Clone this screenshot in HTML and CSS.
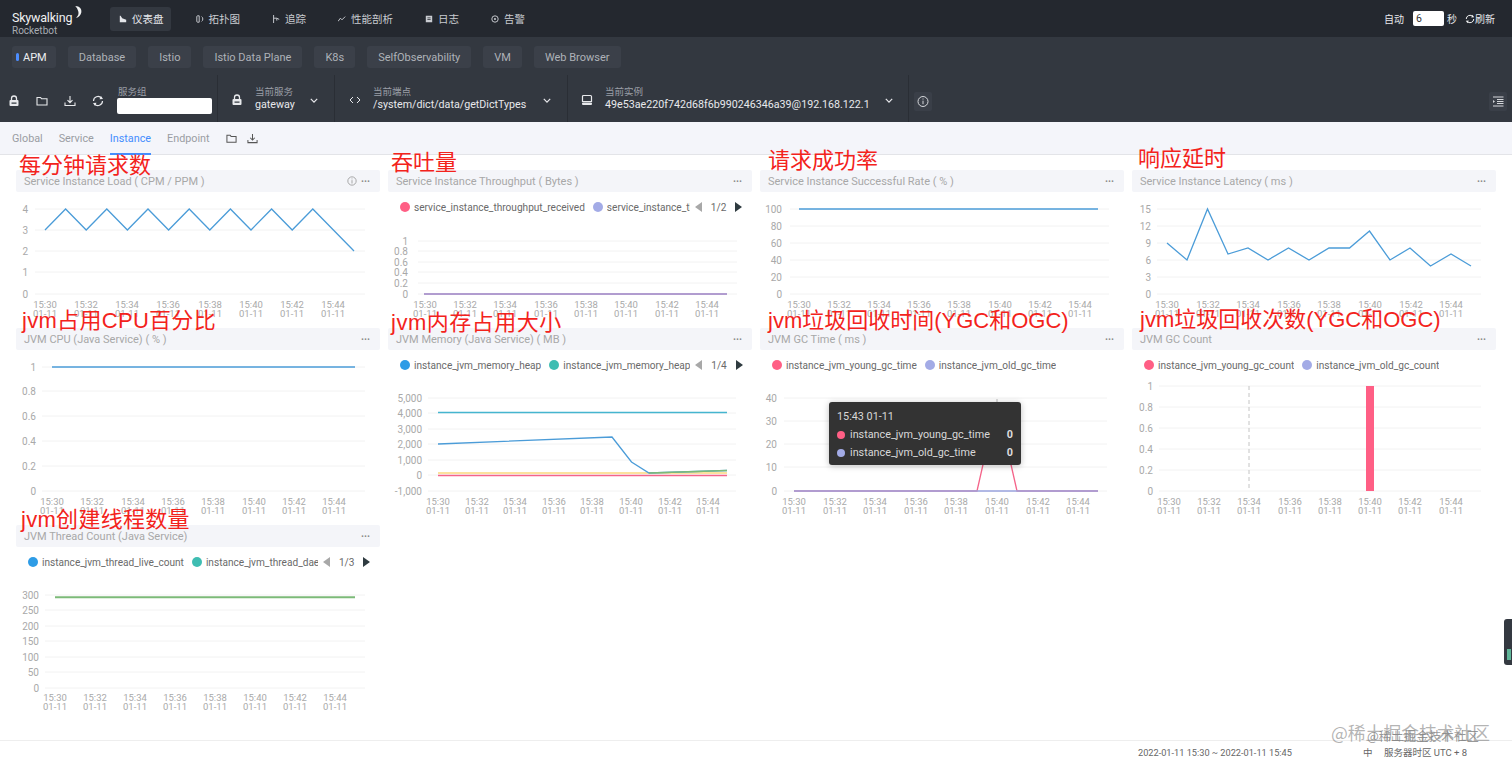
FILE: index.html
```html
<!DOCTYPE html>
<html lang="zh">
<head>
<meta charset="utf-8">
<title>SkyWalking Rocketbot</title>
<link rel="stylesheet" href="styles.css">
</head>
<body>
<header class="topnav">
  <div class="logo">
    <div class="logo-main">Skywalking<svg class="swoosh" viewBox="0 0 12 16"><path d="M3 0c6 0 9 4 8 9-1 3-3 6-7 7 3-3 4-6 3-9-1-3-2-5-4-7z"/></svg></div>
    <div class="logo-sub">Rocketbot</div>
  </div>
  <nav class="nav">
    <a class="nav-item active"><svg class="ni" viewBox="0 0 10 10"><path d="M1 1v8h8V6L4 4 2 1z"/></svg>仪表盘</a>
    <a class="nav-item"><svg class="ni" viewBox="0 0 10 10"><path class="st" d="M2 1h2v8H2a1 1 0 0 1-1-1V2a1 1 0 0 1 1-1zM7 2c2 1 2 5 0 6"/></svg>拓扑图</a>
    <a class="nav-item"><svg class="ni" viewBox="0 0 10 10"><path class="st" d="M2 0v10M2 4h4l3 1.500M6 4v3"/></svg>追踪</a>
    <a class="nav-item"><svg class="ni" viewBox="0 0 10 10"><path class="st" d="M0 8l3-4 2 2 4-4"/></svg>性能剖析</a>
    <a class="nav-item"><svg class="ni" viewBox="0 0 10 10"><path d="M1 1h8v8H1zM3 3v1h4V3zM3 5v1h4V5z" fill-rule="evenodd"/></svg>日志</a>
    <a class="nav-item"><svg class="ni" viewBox="0 0 10 10"><circle class="st" cx="5" cy="5" r="4"/><circle cx="5" cy="5" r="1.300"/></svg>告警</a>
  </nav>
  <div class="auto">
    <span>自动</span>
    <input class="auto-input" value="6" aria-label="seconds">
    <span class="sec">秒</span>
    <svg class="ref" viewBox="0 0 12 12"><path class="st" d="M10.500 6A4.500 4.500 0 0 1 2.500 8.800M1.500 6A4.500 4.500 0 0 1 9.500 3.200"/><path d="M9 1l2 3-3.500 .3zM3 11L1 8l3.500-.3z"/></svg>
    <span>刷新</span>
  </div>
</header>

<div class="subbar">
  <a class="chip current"><i class="dot"></i>APM</a>
  <a class="chip">Database</a>
  <a class="chip">Istio</a>
  <a class="chip">Istio Data Plane</a>
  <a class="chip">K8s</a>
  <a class="chip">SelfObservability</a>
  <a class="chip">VM</a>
  <a class="chip">Web Browser</a>
</div>

<div class="toolbar">
  <div class="tools">
    <svg class="ti" viewBox="0 0 12 12"><use href="#i-lock"/></svg>
    <svg class="ti" viewBox="0 0 12 12"><use href="#i-folder"/></svg>
    <svg class="ti" viewBox="0 0 12 12"><use href="#i-down"/></svg>
    <svg class="ti" viewBox="0 0 12 12"><path class="st2" d="M10.500 6A4.500 4.500 0 0 1 2.500 8.800M1.500 6A4.500 4.500 0 0 1 9.500 3.200"/><path class="fl" d="M9 1l2 3-3.500 .3zM3 11L1 8l3.500-.3z"/></svg>
  </div>
  <div class="tool-block group">
    <label class="tb-label">服务组</label>
    <input class="group-input" aria-label="服务组">
  </div>
  <div class="tool-block service">
    <svg class="tb-icon" viewBox="0 0 12 12"><use href="#i-lock"/></svg>
    <div class="tb-text"><span class="tb-label">当前服务</span><span class="tb-val">gateway</span></div>
    <svg class="chev" viewBox="0 0 10 6"><path d="M1 1l4 4 4-4"/></svg>
  </div>
  <div class="tool-block endpoint">
    <svg class="tb-icon" viewBox="0 0 12 12"><path class="st2 thin" d="M4 3L1 6l3 3M8 3l3 3-3 3"/></svg>
    <div class="tb-text"><span class="tb-label">当前端点</span><span class="tb-val">/system/dict/data/getDictTypes</span></div>
    <svg class="chev" viewBox="0 0 10 6"><path d="M1 1l4 4 4-4"/></svg>
  </div>
  <div class="tool-block instance">
    <svg class="tb-icon" viewBox="0 0 12 12"><path class="st2" d="M2.500 1.500h7a1 1 0 0 1 1 1v5h-9v-5a1 1 0 0 1 1-1z"/><rect class="fl" x="1" y="8.500" width="10" height="2.500" rx="1"/></svg>
    <div class="tb-text"><span class="tb-label">当前实例</span><span class="tb-val">49e53ae220f742d68f6b990246346a39@192.168.122.1</span></div>
    <svg class="chev" viewBox="0 0 10 6"><path d="M1 1l4 4 4-4"/></svg>
  </div>
  <button class="icon-btn info" aria-label="info"><svg viewBox="0 0 12 12"><circle class="st2 thin" cx="6" cy="6" r="5"/><path class="st2 thin" d="M6 5.200v3.500M6 3v1"/></svg></button>
  <button class="icon-btn side" aria-label="menu"><svg viewBox="0 0 12 12"><path class="st2 thin" d="M1 1.500h10.500M5 4h6.500M5 6h6.500M5 8h6.500M1 10.500h10.500"/><path class="fl" d="M1 4.500L3 6 1 7.500z"/></svg></button>
</div>

<div class="tabs">
  <a class="tab">Global</a>
  <a class="tab">Service</a>
  <a class="tab on">Instance</a>
  <a class="tab">Endpoint</a>
  <svg class="tab-icon first" viewBox="0 0 12 12"><use href="#i-folder"/></svg>
  <svg class="tab-icon" viewBox="0 0 12 12"><use href="#i-down"/></svg>
</div>

<main class="board">
  <section class="card r1">
    <span class="note n1">每分钟请求数</span>
    <div class="card-head"><span>Service Instance Load ( CPM / PPM )</span><span class="head-tools"><svg class="head-i" viewBox="0 0 12 12"><circle cx="6" cy="6" r="5"/><path d="M6 5v4M6 3v1"/></svg><b class="more">···</b></span></div>
    <svg class="chart" width="364" height="136" viewBox="16 192 364 136">
      <g class="grid"><path d="M35 209H365M35 230H365M35 251H365M35 272H365M35 294H365"/></g>
      <g class="yl"><text x="28" y="209">4</text><text x="28" y="230">3</text><text x="28" y="251">2</text><text x="28" y="272">1</text><text x="28" y="294">0</text></g>
      <polyline class="l blue" points="45,230 65.600,209 86.200,230 106.800,209 127.400,230 148,209 168.600,230 189.200,209 209.800,230 230.400,209 251,230 271.600,209 292.200,230 312.800,209 333.400,230 354,251"/>
      <g class="xl"><text x="45" y="308">15:30<tspan x="45" dy="8.700">01-11</tspan></text><text x="86" y="308">15:32<tspan x="86" dy="8.700">01-11</tspan></text><text x="127" y="308">15:34<tspan x="127" dy="8.700">01-11</tspan></text><text x="168" y="308">15:36<tspan x="168" dy="8.700">01-11</tspan></text><text x="210" y="308">15:38<tspan x="210" dy="8.700">01-11</tspan></text><text x="251" y="308">15:40<tspan x="251" dy="8.700">01-11</tspan></text><text x="292" y="308">15:42<tspan x="292" dy="8.700">01-11</tspan></text><text x="333" y="308">15:44<tspan x="333" dy="8.700">01-11</tspan></text></g>
    </svg>
  </section>

  <section class="card r1">
    <span class="note n2">吞吐量</span>
    <div class="card-head"><span>Service Instance Throughput ( Bytes )</span><b class="more">···</b></div>
    <div class="legend">
      <span class="li"><i class="c pink"></i><span class="lt">service_instance_throughput_received</span></span>
      <span class="li"><i class="c violet"></i><span class="lt clip-a">service_instance_throughput_sent</span></span>
      <span class="pager"><i class="ar left"></i><span>1/2</span><i class="ar right"></i></span>
    </div>
    <svg class="chart" width="364" height="106" viewBox="388 222 364 106">
      <g class="grid"><path d="M418 241H737M418 251H737M418 262H737M418 272H737M418 283H737M418 294H737"/></g>
      <g class="yl"><text x="408" y="241">1</text><text x="408" y="251">0.8</text><text x="408" y="262">0.6</text><text x="408" y="272">0.4</text><text x="408" y="283">0.2</text><text x="408" y="294">0</text></g>
      <path class="l pinkl" d="M424 294H727"/><path class="l violetl" d="M424 294H727"/>
      <g class="xl"><text x="425" y="308">15:30<tspan x="425" dy="8.700">01-11</tspan></text><text x="465" y="308">15:32<tspan x="465" dy="8.700">01-11</tspan></text><text x="505" y="308">15:34<tspan x="505" dy="8.700">01-11</tspan></text><text x="546" y="308">15:36<tspan x="546" dy="8.700">01-11</tspan></text><text x="586" y="308">15:38<tspan x="586" dy="8.700">01-11</tspan></text><text x="626" y="308">15:40<tspan x="626" dy="8.700">01-11</tspan></text><text x="667" y="308">15:42<tspan x="667" dy="8.700">01-11</tspan></text><text x="707" y="308">15:44<tspan x="707" dy="8.700">01-11</tspan></text></g>
    </svg>
  </section>

  <section class="card r1">
    <span class="note n3">请求成功率</span>
    <div class="card-head"><span>Service Instance Successful Rate ( % )</span><b class="more">···</b></div>
    <svg class="chart" width="364" height="136" viewBox="760 192 364 136">
      <g class="grid"><path d="M790 209H1109M790 226H1109M790 243H1109M790 260H1109M790 277H1109M790 294H1109"/></g>
      <g class="yl"><text x="782" y="209">100</text><text x="782" y="226">80</text><text x="782" y="243">60</text><text x="782" y="260">40</text><text x="782" y="277">20</text><text x="782" y="294">0</text></g>
      <path class="l blue" d="M799 209H1098"/>
      <g class="xl"><text x="799" y="308">15:30<tspan x="799" dy="8.700">01-11</tspan></text><text x="839" y="308">15:32<tspan x="839" dy="8.700">01-11</tspan></text><text x="879" y="308">15:34<tspan x="879" dy="8.700">01-11</tspan></text><text x="919" y="308">15:36<tspan x="919" dy="8.700">01-11</tspan></text><text x="959" y="308">15:38<tspan x="959" dy="8.700">01-11</tspan></text><text x="1000" y="308">15:40<tspan x="1000" dy="8.700">01-11</tspan></text><text x="1040" y="308">15:42<tspan x="1040" dy="8.700">01-11</tspan></text><text x="1080" y="308">15:44<tspan x="1080" dy="8.700">01-11</tspan></text></g>
    </svg>
  </section>

  <section class="card r1">
    <span class="note n4">响应延时</span>
    <div class="card-head"><span>Service Instance Latency ( ms )</span><b class="more">···</b></div>
    <svg class="chart" width="364" height="136" viewBox="1132 192 364 136">
      <g class="grid"><path d="M1157 209H1481M1157 226H1481M1157 243H1481M1157 260H1481M1157 277H1481M1157 294H1481"/></g>
      <g class="yl"><text x="1151" y="209">15</text><text x="1151" y="226">12</text><text x="1151" y="243">9</text><text x="1151" y="260">6</text><text x="1151" y="277">3</text><text x="1151" y="294">0</text></g>
      <polyline class="l blue" points="1167,243 1187,260 1207.500,209 1228,254 1248,248 1268,260 1288.500,248 1309,260 1329,248 1349.500,248 1369.500,231 1390,260 1410,248 1430.500,266 1451,254 1471,266"/>
      <g class="xl"><text x="1167" y="308">15:30<tspan x="1167" dy="8.700">01-11</tspan></text><text x="1208" y="308">15:32<tspan x="1208" dy="8.700">01-11</tspan></text><text x="1248" y="308">15:34<tspan x="1248" dy="8.700">01-11</tspan></text><text x="1289" y="308">15:36<tspan x="1289" dy="8.700">01-11</tspan></text><text x="1329" y="308">15:38<tspan x="1329" dy="8.700">01-11</tspan></text><text x="1370" y="308">15:40<tspan x="1370" dy="8.700">01-11</tspan></text><text x="1411" y="308">15:42<tspan x="1411" dy="8.700">01-11</tspan></text><text x="1451" y="308">15:44<tspan x="1451" dy="8.700">01-11</tspan></text></g>
    </svg>
  </section>

  <section class="card r2">
    <span class="note n5">jvm占用CPU百分比</span>
    <div class="card-head"><span>JVM CPU (Java Service) ( % )</span><b class="more">···</b></div>
    <svg class="chart" width="364" height="175" viewBox="16 350 364 175">
      <g class="grid"><path d="M42 367H365M42 391H365M42 416H365M42 441H365M42 466H365M42 491H365"/></g>
      <g class="yl"><text x="36" y="367">1</text><text x="36" y="391">0.8</text><text x="36" y="416">0.6</text><text x="36" y="441">0.4</text><text x="36" y="466">0.2</text><text x="36" y="491">0</text></g>
      <path class="l blue" d="M52 367H355"/>
      <g class="xl"><text x="52" y="505">15:30<tspan x="52" dy="8.700">01-11</tspan></text><text x="92" y="505">15:32<tspan x="92" dy="8.700">01-11</tspan></text><text x="133" y="505">15:34<tspan x="133" dy="8.700">01-11</tspan></text><text x="173" y="505">15:36<tspan x="173" dy="8.700">01-11</tspan></text><text x="213" y="505">15:38<tspan x="213" dy="8.700">01-11</tspan></text><text x="254" y="505">15:40<tspan x="254" dy="8.700">01-11</tspan></text><text x="294" y="505">15:42<tspan x="294" dy="8.700">01-11</tspan></text><text x="334" y="505">15:44<tspan x="334" dy="8.700">01-11</tspan></text></g>
    </svg>
  </section>

  <section class="card r2">
    <span class="note n6">jvm内存占用大小</span>
    <div class="card-head"><span>JVM Memory (Java Service) ( MB )</span><b class="more">···</b></div>
    <div class="legend">
      <span class="li"><i class="c sky"></i><span class="lt">instance_jvm_memory_heap</span></span>
      <span class="li"><i class="c teal"></i><span class="lt clip-b">instance_jvm_memory_heap_max</span></span>
      <span class="pager"><i class="ar left"></i><span>1/4</span><i class="ar right"></i></span>
    </div>
    <svg class="chart" width="364" height="145" viewBox="388 380 364 145">
      <g class="grid"><path d="M428 398H736M428 413H736M428 429H736M428 444H736M428 460H736M428 475H736M428 491H736"/></g>
      <g class="yl"><text x="422" y="398">5,000</text><text x="422" y="413">4,000</text><text x="422" y="429">3,000</text><text x="422" y="444">2,000</text><text x="422" y="460">1,000</text><text x="422" y="475">0</text><text x="422" y="491">-1,000</text></g>
      <path class="l tealish" d="M438 412.500H727"/>
      <path class="l orange" d="M438 473H727"/>
      <path class="l pinkl" d="M438 475.500H727"/>
      <polyline class="l blue" points="438,444 612,437 631.500,462 649,473 727,470.500"/>
      <polyline class="l green" points="649,473 727,470.500"/>
      <g class="xl"><text x="438" y="505">15:30<tspan x="438" dy="8.700">01-11</tspan></text><text x="477" y="505">15:32<tspan x="477" dy="8.700">01-11</tspan></text><text x="515" y="505">15:34<tspan x="515" dy="8.700">01-11</tspan></text><text x="554" y="505">15:36<tspan x="554" dy="8.700">01-11</tspan></text><text x="592" y="505">15:38<tspan x="592" dy="8.700">01-11</tspan></text><text x="631" y="505">15:40<tspan x="631" dy="8.700">01-11</tspan></text><text x="670" y="505">15:42<tspan x="670" dy="8.700">01-11</tspan></text><text x="708" y="505">15:44<tspan x="708" dy="8.700">01-11</tspan></text></g>
    </svg>
  </section>

  <section class="card r2">
    <span class="note n7">jvm垃圾回收时间(YGC和OGC)</span>
    <div class="card-head"><span>JVM GC Time ( ms )</span><b class="more">···</b></div>
    <div class="legend">
      <span class="li"><i class="c pink"></i><span class="lt">instance_jvm_young_gc_time</span></span>
      <span class="li"><i class="c violet"></i><span class="lt">instance_jvm_old_gc_time</span></span>
    </div>
    <svg class="chart" width="364" height="145" viewBox="760 380 364 145">
      <g class="grid"><path d="M784 398H1107M784 421H1107M784 444H1107M784 467H1107M784 491H1107"/></g>
      <g class="yl"><text x="777" y="398">40</text><text x="777" y="421">30</text><text x="777" y="444">20</text><text x="777" y="467">10</text><text x="777" y="491">0</text></g>
      <path class="tick" d="M997 399V403"/>
      <polyline class="l pinkl" points="794,491 977,491 997,403 1017,491 1098,491"/>
      <path class="l violetl" d="M794 491H1098"/>
      <g class="xl"><text x="794" y="505">15:30<tspan x="794" dy="8.700">01-11</tspan></text><text x="835" y="505">15:32<tspan x="835" dy="8.700">01-11</tspan></text><text x="875" y="505">15:34<tspan x="875" dy="8.700">01-11</tspan></text><text x="916" y="505">15:36<tspan x="916" dy="8.700">01-11</tspan></text><text x="956" y="505">15:38<tspan x="956" dy="8.700">01-11</tspan></text><text x="997" y="505">15:40<tspan x="997" dy="8.700">01-11</tspan></text><text x="1038" y="505">15:42<tspan x="1038" dy="8.700">01-11</tspan></text><text x="1078" y="505">15:44<tspan x="1078" dy="8.700">01-11</tspan></text></g>
    </svg>
    <div class="tooltip">
      <div class="tt-time">15:43 01-11</div>
      <div class="tt-row"><i class="c pink"></i><span class="tt-name">instance_jvm_young_gc_time</span><b>0</b></div>
      <div class="tt-row"><i class="c violet"></i><span class="tt-name">instance_jvm_old_gc_time</span><b>0</b></div>
    </div>
  </section>

  <section class="card r2">
    <span class="note n8">jvm垃圾回收次数(YGC和OGC)</span>
    <div class="card-head"><span>JVM GC Count</span><b class="more">···</b></div>
    <div class="legend">
      <span class="li"><i class="c pink"></i><span class="lt">instance_jvm_young_gc_count</span></span>
      <span class="li"><i class="c violet"></i><span class="lt">instance_jvm_old_gc_count</span></span>
    </div>
    <svg class="chart" width="364" height="145" viewBox="1132 380 364 145">
      <g class="grid"><path d="M1159 386H1481M1159 407H1481M1159 428H1481M1159 449H1481M1159 470H1481M1159 491H1481"/></g>
      <g class="yl"><text x="1153" y="386">1</text><text x="1153" y="407">0.8</text><text x="1153" y="428">0.6</text><text x="1153" y="449">0.4</text><text x="1153" y="470">0.2</text><text x="1153" y="491">0</text></g>
      <path class="guide" d="M1249 386V491"/>
      <rect class="bar" x="1366" y="386" width="8" height="105"/>
      <g class="xl"><text x="1169" y="505">15:30<tspan x="1169" dy="8.700">01-11</tspan></text><text x="1209" y="505">15:32<tspan x="1209" dy="8.700">01-11</tspan></text><text x="1249" y="505">15:34<tspan x="1249" dy="8.700">01-11</tspan></text><text x="1290" y="505">15:36<tspan x="1290" dy="8.700">01-11</tspan></text><text x="1330" y="505">15:38<tspan x="1330" dy="8.700">01-11</tspan></text><text x="1370" y="505">15:40<tspan x="1370" dy="8.700">01-11</tspan></text><text x="1410" y="505">15:42<tspan x="1410" dy="8.700">01-11</tspan></text><text x="1451" y="505">15:44<tspan x="1451" dy="8.700">01-11</tspan></text></g>
    </svg>
  </section>

  <section class="card r3">
    <span class="note n9">jvm创建线程数量</span>
    <div class="card-head"><span>JVM Thread Count (Java Service)</span><b class="more">···</b></div>
    <div class="legend">
      <span class="li"><i class="c sky"></i><span class="lt">instance_jvm_thread_live_count</span></span>
      <span class="li"><i class="c teal"></i><span class="lt clip-c">instance_jvm_thread_daemon_count</span></span>
      <span class="pager"><i class="ar left"></i><span>1/3</span><i class="ar right"></i></span>
    </div>
    <svg class="chart" width="364" height="145" viewBox="16 577 364 145">
      <g class="grid"><path d="M45 595H365M45 610H365M45 626H365M45 641H365M45 657H365M45 672H365M45 688H365"/></g>
      <g class="yl"><text x="39" y="595">300</text><text x="39" y="610">250</text><text x="39" y="626">200</text><text x="39" y="641">150</text><text x="39" y="657">100</text><text x="39" y="672">50</text><text x="39" y="688">0</text></g>
      <path class="l green wide" d="M55 597.300H355"/>
      <g class="xl"><text x="55" y="701">15:30<tspan x="55" dy="8.700">01-11</tspan></text><text x="95" y="701">15:32<tspan x="95" dy="8.700">01-11</tspan></text><text x="135" y="701">15:34<tspan x="135" dy="8.700">01-11</tspan></text><text x="175" y="701">15:36<tspan x="175" dy="8.700">01-11</tspan></text><text x="215" y="701">15:38<tspan x="215" dy="8.700">01-11</tspan></text><text x="255" y="701">15:40<tspan x="255" dy="8.700">01-11</tspan></text><text x="295" y="701">15:42<tspan x="295" dy="8.700">01-11</tspan></text><text x="335" y="701">15:44<tspan x="335" dy="8.700">01-11</tspan></text></g>
    </svg>
  </section>
</main>

<footer class="foot">
  <span class="range">2022-01-11 15:30 ~ 2022-01-11 15:45</span>
  <span class="lang">中</span>
  <span class="zone">服务器时区 UTC + 8</span>
</footer>

<div class="wm wm-back">@稀土掘金技术社区</div>
<div class="wm wm-front">@稀土掘金技术社区</div>
<div class="handle"><i></i></div>

<svg class="sprite" aria-hidden="true">
  <symbol id="i-lock" viewBox="0 0 12 12"><path d="M3.500 5V3.500a2.500 2.500 0 0 1 5 0V5" fill="none" stroke="currentColor" stroke-width="1.300"/><path d="M2.500 5h7a1 1 0 0 1 1 1v4a1 1 0 0 1-1 1h-7a1 1 0 0 1-1-1V6a1 1 0 0 1 1-1zM3.500 7.500v1.300h5V7.500z" fill="currentColor" fill-rule="evenodd"/></symbol>
  <symbol id="i-folder" viewBox="0 0 12 12"><path d="M1 2.500h3.500l1 1.200H11v6.300H1z" fill="none" stroke="currentColor" stroke-width="1.100"/></symbol>
  <symbol id="i-down" viewBox="0 0 12 12"><path d="M6 1v6.500M3.500 5.200L6 7.700l2.500-2.500M1 7.500V10.500h10V7.500" fill="none" stroke="currentColor" stroke-width="1.100"/></symbol>
</svg>
</body>
</html>
```

FILE: styles.css
```css
* { box-sizing: border-box; }
html, body { margin: 0; padding: 0; }
body {
  height: 763px;
  overflow: hidden;
  position: relative;
  background: #fff;
  font-family: Roboto, "Noto Sans CJK SC", sans-serif;
  color: #666;
  font-size: 10.5px;
}
a { text-decoration: none; }
i { display: block; }
.st { fill: none; stroke: currentColor; stroke-width: 1.2; }
.st2 { fill: none; stroke: currentColor; stroke-width: 1.2; }
.st2.thin { stroke-width: 1; }
.fl { fill: currentColor; }
.sprite { display: none; }

/* top nav */
.topnav {
  height: 37px;
  background: #24282f;
  display: flex;
  align-items: center;
  padding: 0 17px 0 12px;
  color: #e8e9ec;
}
.logo { width: 98px; flex: none; padding-top: 9px; }
.logo-main {
  font-size: 12.500px;
  letter-spacing: -.2px;
  line-height: 15px;
  color: #f1f2f3;
  display: flex;
  height: 15px;
}
.swoosh { width: 9px; height: 12px; fill: #f1f2f3; margin: -4px 0 0 1px; }
.logo-sub { font-size: 10px; line-height: 12px; color: #a9adb3; }
.nav { display: flex; align-items: center; height: 24px; gap: 6px; }
.nav-item {
  height: 24px;
  padding: 0 7px 0 9px;
  display: flex;
  align-items: center;
  gap: 5px;
  border-radius: 3px;
  color: #c9ccd1;
  margin-right: 10px;
}
.nav-item.active { background: #333840; color: #e4e6ea; }
.ni { width: 8px; height: 8px; fill: currentColor; flex: none; }
.auto { margin-left: auto; display: flex; align-items: center; color: #e8e9ec; font-size: 10px; }
.auto-input {
  width: 31px;
  height: 15px;
  margin: 0 3px 0 9px;
  padding: 0 3px;
  border: 0;
  border-radius: 2px;
  background: #fff;
  color: #333;
  font: 10.5px Roboto, sans-serif;
}
.sec { margin-right: 8px; }
.ref { width: 10px; height: 10px; fill: #f1f2f3; color: #f1f2f3; }

/* sub bar */
.subbar {
  height: 38px;
  background: #333840;
  display: flex;
  gap: 12px;
  padding: 9px 12px 7px;
}
.chip {
  height: 22px;
  padding: 0 11px;
  border-radius: 3px;
  background: #3b4049;
  color: #aeb2b8;
  display: flex;
  align-items: center;
  font-size: 11px;
}
.chip.current { color: #eceef1; padding: 0 9px 0 4px; gap: 4px; }
.dot { width: 3px; height: 8px; border-radius: 2px; background: #4c8dff; }

/* tool bar */
.toolbar {
  height: 47px;
  background: #333840;
  display: flex;
  align-items: stretch;
  color: #e8e9ec;
}
.tools { display: flex; align-items: center; width: 117px; flex: none; padding: 4px 0 0 8px; gap: 16px; }
.ti { width: 12px; height: 12px; flex: none; color: #e8e9ec; }
.tool-block {
  display: flex;
  align-items: center;
  border-right: 1px solid #2a2e35;
}
.group { width: 101px; flex: none; flex-direction: column; align-items: flex-start; justify-content: flex-end; padding-bottom: 8px; }
.group .tb-label { margin-left: 1px; }
.tb-label { color: #9a9ea6; font-size: 9.5px; line-height: 12px; }
.group-input { width: 95px; height: 16px; border: 0; border-radius: 2px; background: #fff; padding: 0; }
.tb-text { display: flex; flex-direction: column; }
.tb-val { font-size: 10.700px; line-height: 14px; color: #e8e9ec; white-space: nowrap; }
.tb-icon { width: 12px; height: 12px; flex: none; margin: 3px 12px 0 0; }
.service { width: 117px; flex: none; padding-left: 13px; }
.service .tb-text { width: 55px; }
.endpoint { width: 233px; flex: none; padding-left: 14px; }
.endpoint .tb-text { width: 170px; }
.instance { width: 341px; flex: none; padding-left: 13px; }
.instance .tb-text { width: 280px; }
.chev { width: 8px; height: 5px; fill: none; stroke: #e8e9ec; stroke-width: 1.5; flex: none; margin-top: 3px; }
.icon-btn {
  width: 18px;
  height: 19px;
  padding: 3px;
  border: 0;
  background: #3a3f48;
  color: #d5d7db;
  border-radius: 2px;
  align-self: center;
  margin-top: 5px;
}
.icon-btn svg { display: block; width: 12px; height: 13px; }
.info { margin-left: 5px; }
.side { margin-left: auto; margin-right: 5px; }

/* tabs */
.tabs {
  height: 33px;
  background: #f4f5fa;
  border-bottom: 1px solid #e3e4e8;
  display: flex;
  padding-left: 12px;
  gap: 16px;
  align-items: stretch;
  font-size: 10.800px;
}
.tab {
  color: #9a9da3;
  display: flex;
  align-items: center;
  border-bottom: 2px solid transparent;
  margin-bottom: -1px;
  padding-top: 2px;
}
.tab.on { color: #448dfe; border-bottom-color: #448dfe; }
.tab-icon { width: 11px; height: 11px; color: #555; align-self: center; margin-left: -6px; }
.tab-icon.first { margin-left: 0; }

/* board */
.board {
  display: grid;
  grid-template-columns: repeat(4, 364px);
  grid-template-rows: 158px 197px 197px;
  column-gap: 8px;
  padding: 15px 16px 0;
}
.card { position: relative; }
.card-head {
  height: 22px;
  background: #f4f5f9;
  border-radius: 2px;
  padding: 0 10px 0 8px;
  display: flex;
  align-items: center;
  justify-content: space-between;
  color: #a8a8a8;
  font-size: 11px;
}
.head-tools { display: flex; align-items: center; gap: 4px; }
.head-i { width: 10px; height: 10px; fill: none; stroke: #999; stroke-width: 1; }
.more { color: #888; font-weight: 700; font-size: 10px; letter-spacing: 0; }
.chart { display: block; }
.grid path { stroke: #f2f2f2; stroke-width: 1; fill: none; }
.yl text { text-anchor: end; dominant-baseline: central; font-size: 10px; fill: #a9a9a9; }
.xl text { text-anchor: middle; font-size: 9.500px; fill: #a9a9a9; }
.l { fill: none; stroke-width: 1.300; }
.blue { stroke: #4b9cd8; }
.tealish { stroke: #45b5cf; }
.pinkl { stroke: #f5648a; }
.violetl { stroke: #9aa3de; }
.orange { stroke: #fbd87e; stroke-width: 1.500; }
.green { stroke: #7cba78; }
.wide { stroke-width: 2; }
.guide { stroke: #c4c4c4; stroke-dasharray: 4 3; fill: none; stroke-width: 1; }
.tick { stroke: #bbb; stroke-width: 1; fill: none; }
.bar { fill: #ff5f85; }

/* legend */
.legend {
  height: 30px;
  display: flex;
  align-items: center;
  padding-left: 12px;
  gap: 8px;
  color: #6a6a6a;
  font-size: 10.100px;
  white-space: nowrap;
}
.li { display: flex; align-items: center; gap: 4px; }
.c { width: 10px; height: 10px; border-radius: 50%; flex: none; }
.pink { background: #ff5f85; }
.violet { background: #a3abe6; }
.sky { background: #2e9ce6; }
.teal { background: #3fbdb2; }
.lt { display: block; overflow: hidden; }
.clip-a { width: 83px; }
.clip-b { width: 127px; }
.clip-c { width: 112px; }
.pager { display: flex; align-items: center; gap: 9px; margin-left: -3px; }
.ar { width: 0; height: 0; border-style: solid; border-width: 5.500px 0; border-color: transparent; }
.ar.left { border-right: 7px solid #a8a8a8; }
.ar.right { border-left: 7px solid #2f3b40; }

/* tooltip over the GC time chart */
.tooltip {
  position: absolute;
  left: 69px;
  top: 74px;
  width: 192px;
  height: 63px;
  padding: 6px 8px;
  background: #333;
  border-radius: 3px;
  box-shadow: 0 1px 6px rgba(0,0,0,.25);
  color: #d8d8d8;
  font-size: 10.800px;
  line-height: 18px;
}
.tt-row { display: flex; align-items: center; }
.tt-row .c { width: 8px; height: 8px; margin-right: 5px; }
.tt-name { flex: 1; }
.tt-row b { color: #ddd; }

/* red screenshot annotations laid over the cards */
.note {
  position: absolute;
  z-index: 2;
  color: #f3231c;
  font-family: "Liberation Sans", "Noto Sans CJK SC", sans-serif;
  font-size: 22px;
  line-height: 26px;
  white-space: nowrap;
}
.n1 { left: 3px; top: -17px; }
.n2 { left: 3px; top: -20px; }
.n3 { left: 8px; top: -22px; }
.n4 { left: 6px; top: -24px; }
.n5 { left: 6px; top: -20px; letter-spacing: .3px; }
.n6 { left: 3px; top: -18px; letter-spacing: .5px; }
.n7 { left: 8px; top: -20px; }
.n8 { left: 8px; top: -21px; }
.n9 { left: 5px; top: -18px; letter-spacing: .3px; }

/* footer */
.foot {
  position: absolute;
  left: 0;
  right: 0;
  top: 740px;
  height: 23px;
  border-top: 1px solid #eee;
  display: flex;
  align-items: center;
  padding-left: 1138px;
  color: #666;
  font-size: 9.500px;
}
.range { width: 225px; font-size: 9.200px; }
.lang { width: 21px; }

.wm { position: absolute; white-space: nowrap; font-family: "Noto Sans CJK SC", sans-serif; }
.wm-back { left: 1367px; top: 728px; font-size: 12.500px; line-height: 16px; color: rgba(120,120,120,.75); }
.wm-front { left: 1331px; top: 720px; font-size: 17.800px; line-height: 24px; color: rgba(130,130,130,.6); }

.handle {
  position: absolute;
  left: 1504px;
  top: 619px;
  width: 8px;
  height: 46px;
  background: #343941;
  border-radius: 3px 0 0 3px;
  padding: 30px 0 0 3px;
}
.handle i { width: 4px; height: 11px; background: #5fb598; }
```
